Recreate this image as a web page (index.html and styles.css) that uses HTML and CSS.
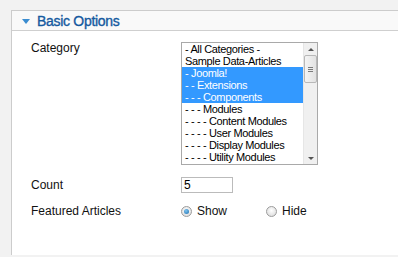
FILE: index.html
```html
<!DOCTYPE html>
<html>
<head>
<meta charset="utf-8">
<link rel="stylesheet" href="styles.css">
</head>
<body>
<div class="panel">
  <div class="panel-head">
    <span class="caret"></span>
    <span class="title">Basic Options</span>
  </div>
  <div class="panel-body">
    <div class="row row-cat">
      <div class="label">Category</div>
      <div class="listbox">
        <ul class="options">
          <li>- All Categories -</li>
          <li>Sample Data-Articles</li>
          <li class="sel">- Joomla!</li>
          <li class="sel">- - Extensions</li>
          <li class="sel">- - - Components</li>
          <li>- - - Modules</li>
          <li>- - - - Content Modules</li>
          <li>- - - - User Modules</li>
          <li>- - - - Display Modules</li>
          <li>- - - - Utility Modules</li>
        </ul>
        <div class="scrollbar">
          <div class="sb-btn"><span class="arr up"></span></div>
          <div class="sb-thumb"><span class="grip"></span></div>
          <div class="sb-track"></div>
          <div class="sb-btn"><span class="arr down"></span></div>
        </div>
      </div>
    </div>
    <div class="row row-count">
      <div class="label">Count</div>
      <div class="textbox">5</div>
    </div>
    <div class="row row-feat">
      <div class="label">Featured Articles</div>
      <div class="radios">
        <span class="opt opt-show"><span class="radio on"></span>Show</span>
        <span class="opt"><span class="radio"></span>Hide</span>
      </div>
    </div>
  </div>
</div>
</body>
</html>
```
FILE: styles.css
```css
html, body {
  margin: 0;
  padding: 0;
  background: #f2f2f2;
  overflow: hidden;
}
body {
  font-family: "Liberation Sans", Arial, sans-serif;
  color: #111;
  padding: 10px 0 0 11px;
}
.panel {
  height: 244px;
  border: 1px solid #cccccc;
  border-right: none;
  border-bottom: none;
  background: #ffffff;
}
.panel-head {
  height: 19px;
  background: #f9f9f9;
  border-bottom: 1px solid #cfcfcf;
  display: flex;
  align-items: center;
  padding-left: 10px;
}
.caret {
  width: 0;
  height: 0;
  border-left: 4px solid transparent;
  border-right: 4px solid transparent;
  border-top: 5px solid #3a8cd0;
  margin-right: 7px;
  margin-top: 2px;
}
.title {
  font-size: 14px;
  line-height: 19px;
  color: #15599f;
  letter-spacing: -0.3px;
  -webkit-text-stroke: 0.35px #15599f;
  padding-top: 1px;
}
.panel-body {
  padding: 10px 0 0 19px;
}
.row {
  display: flex;
  align-items: flex-start;
}
.label {
  width: 150px;
  font-size: 12px;
  line-height: 14px;
}
.row-cat .listbox {
  margin-top: 1px;
}
.listbox {
  width: 135px;
  height: 121px;
  border: 1px solid #a9a9a9;
  display: flex;
  background: #fff;
}
.options {
  list-style: none;
  margin: 0;
  padding: 0;
  width: 122px;
}
.options li {
  height: 12px;
  line-height: 12px;
  font-size: 11px;
  letter-spacing: -0.36px;
  padding-left: 3px;
  white-space: nowrap;
  color: #000;
}
.options li.sel {
  background: #3399ff;
  color: #fff;
}
.scrollbar {
  width: 13px;
  display: flex;
  flex-direction: column;
  background: #f0f0f0;
  border-left: 1px solid #e6e6e6;
}
.sb-btn {
  height: 12px;
  display: flex;
  align-items: center;
  justify-content: center;
}
.arr {
  width: 0;
  height: 0;
  border-left: 3px solid transparent;
  border-right: 3px solid transparent;
}
.arr.up {
  border-bottom: 3px solid #555;
}
.arr.down {
  border-top: 3px solid #555;
}
.sb-thumb {
  height: 26px;
  border: 1px solid #b8b8b8;
  border-radius: 2px;
  background: linear-gradient(to right, #f4f4f4, #e2e2e2);
  display: flex;
  align-items: center;
  justify-content: center;
}
.grip {
  width: 5px;
  height: 5px;
  background: repeating-linear-gradient(to bottom, #7a7a7a 0 1px, transparent 1px 2px);
}
.sb-track {
  flex: 1;
}
.row-count {
  margin-top: 12px;
}
.row-count .label {
  padding-top: 1px;
}
.textbox {
  width: 48px;
  height: 14px;
  border: 1px solid #bbbbbb;
  font-size: 12px;
  line-height: 14px;
  padding-left: 2px;
  color: #000;
}
.row-feat {
  margin-top: 11px;
}
.radios {
  display: flex;
  font-size: 12px;
  line-height: 14px;
  color: #111;
}
.opt {
  display: flex;
  align-items: center;
}
.opt-show {
  width: 85px;
}
.radio {
  width: 9px;
  height: 9px;
  border: 1px solid #9c9c9c;
  border-radius: 50%;
  background: radial-gradient(circle at 50% 40%, #ffffff, #d6d6d6);
  margin-right: 5px;
  position: relative;
}
.radio.on::after {
  content: "";
  position: absolute;
  left: 2px;
  top: 2px;
  width: 5px;
  height: 5px;
  border-radius: 50%;
  background: radial-gradient(circle at 40% 35%, #7cc3f0, #1f6fae);
}
```
